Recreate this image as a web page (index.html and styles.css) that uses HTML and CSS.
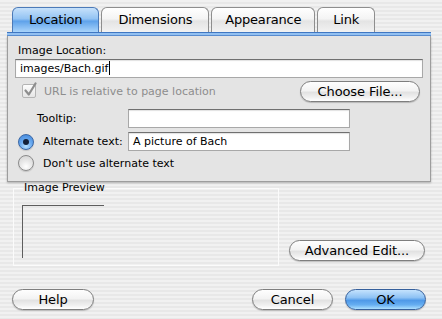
FILE: index.html
```html
<!DOCTYPE html>
<html lang="en">
<head>
  <meta charset="UTF-8">
  <title>Image Properties</title>
  <link rel="stylesheet" href="styles.css">
</head>
<body>
  <div class="dialog">
    <div class="tabs">
      <div class="tab selected">Location</div>
      <div class="tab">Dimensions</div>
      <div class="tab">Appearance</div>
      <div class="tab">Link</div>
    </div>
    <div class="strip"></div>

    <div class="panel">
      <div class="label">Image Location:</div>
      <div class="field wide">images/Bach.gif<span class="caret"></span></div>

      <div class="row">
        <label class="check">
          <span class="checkbox">
            <svg width="16" height="16" viewBox="0 0 16 16"><path d="M3.5 8.5 L6.8 12.5 L13.5 1.5" fill="none" stroke="#8e8e8e" stroke-width="2.2" stroke-linecap="round" stroke-linejoin="round"/></svg>
          </span>
          URL is relative to page location
        </label>
        <button class="btn choose">Choose File...</button>
      </div>

      <div class="grid">
        <span class="glabel">Tooltip:</span>
        <div class="field"></div>
        <label class="option"><span class="radio on"></span>Alternate text:</label>
        <div class="field">A picture of Bach</div>
        <label class="option full"><span class="radio"></span>Don't use alternate text</label>
      </div>
    </div>

    <div class="middle">
      <fieldset class="preview">
        <legend>Image Preview</legend>
        <div class="frame"></div>
      </fieldset>
      <button class="btn advanced">Advanced Edit...</button>
    </div>

    <div class="footer">
      <button class="btn help">Help</button>
      <button class="btn cancel">Cancel</button>
      <button class="btn ok">OK</button>
    </div>
  </div>
</body>
</html>
```

FILE: styles.css
```css
body {
  margin: 0;
  width: 442px;
  height: 319px;
  overflow: hidden;
  font-family: "DejaVu Sans", sans-serif;
  font-size: 11px;
  color: #000;
  background: repeating-linear-gradient(#f1f1f1 0 2px, #e8e8e8 2px 4px);
}

.dialog {
  width: 424px;
  padding: 7px 0 0 7px;
}

/* tabs */
.tabs {
  display: flex;
  gap: 2px;
  margin-left: 5px;
  height: 25px;
}
.tab {
  box-sizing: border-box;
  height: 25px;
  padding: 0 16px;
  border: 1px solid #8e8e8e;
  border-bottom: none;
  border-radius: 6px 6px 0 0;
  font-size: 13px;
  letter-spacing: -0.2px;
  line-height: 23px;
  text-align: center;
  background: linear-gradient(#ffffff, #f4f4f4 45%, #e4e4e4 55%, #f2f2f2);
}
.tab:nth-child(3) {
  padding: 0 13px;
}
.tab:last-child {
  padding: 0 15px;
}
.tab.selected {
  border-color: #4c7ab8;
  background: linear-gradient(#c6e1fb, #93c3f3 45%, #5fa2ea 55%, #a9d4fb);
}
.strip {
  box-sizing: border-box;
  height: 4px;
  border-top: 1px solid #4077c2;
  border-bottom: 1px solid #5b8fd3;
  background: #92c0f1;
}

/* main panel */
.panel {
  box-sizing: border-box;
  padding: 8px 7px 10px 7px;
  border: 1px solid #9d9d9d;
  border-top: none;
  background: #e4e4e4;
  box-shadow: 0 1px 2px rgba(0, 0, 0, 0.25);
}
.label {
  margin-left: 3px;
  line-height: 13px;
}
.field {
  box-sizing: border-box;
  height: 19px;
  padding: 0 4px;
  border: 1px solid #a8a8a8;
  border-top-color: #707070;
  background: #fff;
  line-height: 17px;
  box-shadow: inset 0 1px 1px rgba(0, 0, 0, 0.12);
}
.field.wide {
  margin-top: 2px;
  width: 408px;
}
.caret {
  display: inline-block;
  width: 1px;
  height: 14px;
  margin-left: 1px;
  vertical-align: -3px;
  background: #000;
}

.row {
  display: flex;
  align-items: center;
  justify-content: space-between;
  height: 22px;
  margin-top: 2px;
}
.check {
  display: flex;
  align-items: center;
  gap: 8px;
  margin-left: 7px;
  color: #8d8d8d;
}
.checkbox {
  position: relative;
  box-sizing: border-box;
  width: 14px;
  height: 14px;
  border: 1px solid #b4b4b4;
  border-radius: 2px;
  background: linear-gradient(#fdfdfd, #e6e6e6);
}
.checkbox svg {
  position: absolute;
  left: -1px;
  top: -3px;
}

.grid {
  display: grid;
  grid-template-columns: 113px 222px;
  row-gap: 4px;
  align-items: center;
  margin-top: 7px;
}
.glabel {
  padding-left: 22px;
}
.option {
  display: flex;
  align-items: center;
  gap: 9px;
  margin-left: 3px;
}
.option.full {
  grid-column: 1 / 3;
}
.radio {
  position: relative;
  box-sizing: border-box;
  width: 16px;
  height: 16px;
  border: 1px solid #8a8a8a;
  border-radius: 50%;
  background: radial-gradient(circle at 50% 75%, #ffffff, #e8e8e8 45%, #cfcfcf);
  box-shadow: 0 1px 1px rgba(0, 0, 0, 0.15);
}
.radio.on {
  border-color: #3a67a6;
  background: radial-gradient(circle at 50% 80%, #b6e0ff, #6aaaf0 45%, #3d83d8);
}
.radio.on::after {
  content: "";
  position: absolute;
  left: 4px;
  top: 4px;
  width: 6px;
  height: 6px;
  border-radius: 50%;
  background: #14213a;
}

/* buttons */
.btn {
  box-sizing: border-box;
  height: 21px;
  padding: 0;
  border: 1px solid #7e7e7e;
  border-radius: 11px;
  font-family: "DejaVu Sans", sans-serif;
  font-size: 13px;
  letter-spacing: -0.1px;
  line-height: 19px;
  color: #000;
  background: linear-gradient(#fefefe, #f3f3f3 45%, #e2e2e2 55%, #f0f0f0 80%, #ffffff);
  box-shadow: 0 1px 1px rgba(0, 0, 0, 0.2);
}
.btn.choose {
  width: 120px;
  margin-right: 3px;
}
.btn.advanced {
  width: 136px;
  align-self: flex-end;
  margin: 0 6px 6px auto;
}
.btn.help {
  width: 82px;
  margin-right: auto;
}
.btn.cancel,
.btn.ok {
  width: 81px;
}
.btn.ok {
  border-color: #36609c;
  background: linear-gradient(#c4e2fd, #8ec2f4 40%, #4f99e8 55%, #66aef1 78%, #ade0ff);
}

/* preview area */
.middle {
  display: flex;
  height: 85px;
}
.preview {
  box-sizing: border-box;
  width: 266px;
  height: 84px;
  margin: 0 0 0 6px;
  padding: 0 8px 0 8px;
  border: 1px solid #fbfbfb;
  min-inline-size: 0;
}
.preview legend {
  padding: 0 1px;
  margin-left: 1px;
  line-height: 12px;
}
.frame {
  width: 81px;
  height: 52px;
  margin-top: 11px;
  border-top: 1px solid #5e5e5e;
  border-left: 1px solid #5e5e5e;
}

.footer {
  display: flex;
  gap: 12px;
  margin: 22px 5px 0 5px;
}
```
